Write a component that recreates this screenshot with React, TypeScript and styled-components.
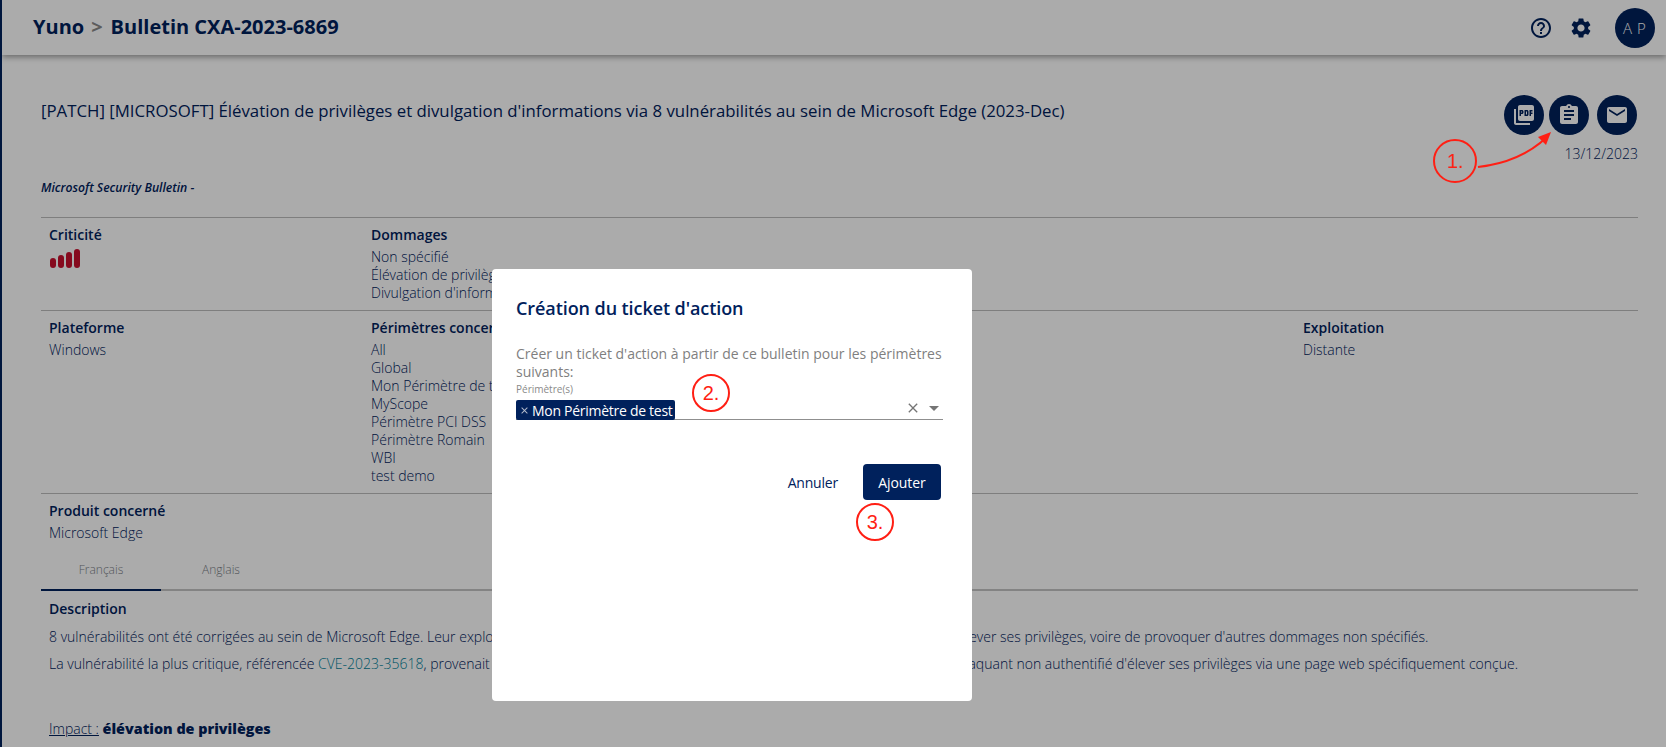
import React from 'react';
import styled, { createGlobalStyle } from 'styled-components';
import {
  MdHelpOutline,
  MdSettings,
  MdPictureAsPdf,
  MdAssignment,
  MdEmail,
  MdClose,
  MdArrowDropDown,
} from 'react-icons/md';

const NAVY = '#00215c';

const GlobalStyle = createGlobalStyle`
  html, body {
    margin: 0;
    height: 100%;
    overflow: hidden;
    background: #fff;
  }
  body {
    font-family: 'Open Sans', 'Liberation Sans', sans-serif;
    font-size: 14px;
    font-weight: 300;
    color: ${NAVY};
  }
  * { box-sizing: border-box; }
`;

const Page = styled.div`
  height: 747px;
  border-left: 2px solid ${NAVY};
  overflow: hidden;
`;

const Header = styled.header`
  height: 55px;
  padding: 0 11px 0 31px;
  display: flex;
  align-items: center;
  justify-content: space-between;
  box-shadow: 0 2px 6px rgba(0, 0, 0, 0.4);
`;

const Crumbs = styled.h1`
  margin: -3px 0 0;
  font-size: 20px;
  font-weight: 700;
  line-height: 27px;
`;

const CrumbSep = styled.span`
  color: #8a8a8a;
  margin: 0 8px 0 7px;
`;

const HeaderIcons = styled.div`
  display: flex;
  align-items: center;
`;

const HeaderIcon = styled.span`
  display: flex;
  font-size: 24px;
  margin-left: 16px;
`;

const Avatar = styled.div`
  width: 40px;
  height: 40px;
  margin-left: 22px;
  padding-left: 4px;
  border-radius: 50%;
  background: ${NAVY};
  color: #fff;
  font-size: 15px;
  letter-spacing: 5px;
  display: flex;
  align-items: center;
  justify-content: center;
`;

const Main = styled.main`
  padding: 40px 28px 0 39px;
`;

const TitleRow = styled.div`
  display: flex;
  justify-content: space-between;
  height: 82px;
`;

const BulletinTitle = styled.h2`
  margin: 5px 0 0;
  font-size: 16.8px;
  font-weight: 400;
  line-height: 22px;
`;

const Actions = styled.div`
  display: flex;
  flex-direction: column;
  align-items: flex-end;
`;

const ActionButtons = styled.div`
  display: flex;
  gap: 5px;
  margin-right: 1px;
`;

const ActionButton = styled.span<{ $gap?: number }>`
  width: 40px;
  height: 40px;
  margin-left: ${p => p.$gap ?? 0}px;
  border-radius: 50%;
  background: ${NAVY};
  color: #fff;
  font-size: 24px;
  display: flex;
  align-items: center;
  justify-content: center;
`;

const DateLabel = styled.div`
  margin-top: 9px;
  font-size: 14px;
  line-height: 20px;
`;

const Source = styled.div`
  font-size: 12.2px;
  font-style: italic;
  font-weight: 600;
  line-height: 16px;
  height: 40px;
  padding-top: 3px;
`;

const InfoRow = styled.section<{ $height: number }>`
  display: grid;
  grid-template-columns: 322px 932px 1fr;
  height: ${p => p.$height}px;
  border-top: 1px solid #bdbdbd;
  padding: 7px 8px 0;
`;

const Cell = styled.div``;

const Label = styled.div`
  font-weight: 600;
  line-height: 19px;
  margin-bottom: 4px;
`;

const Value = styled.div`
  line-height: 18px;
  white-space: nowrap;
`;

const Tabs = styled.nav`
  display: flex;
  height: 37px;
  margin-top: -5px;
  border-bottom: 2px solid #c4c4c4;
`;

const Tab = styled.div<{ $active?: boolean }>`
  width: 120px;
  height: 37px;
  font-size: 12px;
  color: #7b7f88;
  display: flex;
  align-items: center;
  justify-content: center;
  padding-bottom: 5px;
  border-bottom: 2px solid ${p => (p.$active ? NAVY : 'transparent')};
`;

const Description = styled.article`
  padding: 8px 8px 0;

  ${Label} {
    margin-bottom: 9px;
  }
`;

const Paragraph = styled.p`
  margin: 0 0 8px;
  line-height: 19px;
  white-space: nowrap;
`;

const CveLink = styled.a`
  color: #007f9a;
`;

const Impact = styled.p`
  margin: 46px 0 0;
  line-height: 19px;
`;

const ImpactLabel = styled.span`
  text-decoration: underline;
`;

const ImpactValue = styled.strong`
  font-size: 14.35px;
  font-weight: 800;
`;

const Backdrop = styled.div`
  position: fixed;
  inset: 0;
  background: rgba(0, 0, 0, 0.33);
`;

const Modal = styled.div`
  position: absolute;
  left: 492px;
  top: 269px;
  width: 480px;
  height: 432px;
  padding: 24px 29px 24px 24px;
  background: #fff;
  border-radius: 4px;
`;

const ModalTitle = styled.h3`
  margin: 0;
  font-size: 18px;
  font-weight: 600;
  line-height: 30px;
  letter-spacing: -0.08px;
  color: ${NAVY};
`;

const ModalText = styled.p`
  margin: 22px 0 0;
  font-size: 14px;
  font-weight: 400;
  line-height: 18px;
  color: #7f7f7f;
`;

const FieldLabel = styled.div`
  margin-top: 1px;
  font-size: 10px;
  font-weight: 400;
  line-height: 14px;
  color: #8a8a8a;
`;

const Field = styled.div`
  height: 24px;
  display: flex;
  align-items: flex-end;
  justify-content: space-between;
  border-bottom: 1px solid #8f8f8f;
`;

const Chip = styled.span`
  height: 20px;
  margin-bottom: -1px;
  padding: 0 2px 0 3px;
  display: inline-flex;
  align-items: center;
  gap: 2px;
  background: ${NAVY};
  color: #fff;
  border-radius: 2px;
  font-size: 14px;
  font-weight: 400;
  letter-spacing: -0.28px;
  white-space: nowrap;
`;

const ChipClose = styled.span`
  display: flex;
  font-size: 11px;
  color: #b5bdcc;
`;

const FieldIcons = styled.span`
  display: flex;
  align-items: center;
  height: 22px;
  color: #757575;
`;

const ClearIcon = styled.span`
  display: flex;
  font-size: 16px;
  margin-right: 1px;
`;

const CaretIcon = styled.span`
  display: flex;
  font-size: 24px;
  margin-right: -3px;
`;

const ModalActions = styled.div`
  display: flex;
  justify-content: flex-end;
  align-items: center;
  gap: 9px;
  margin: 44px 2px 0 0;
`;

const TextButton = styled.button`
  height: 36px;
  padding: 0 16px;
  border: 0;
  background: none;
  font: inherit;
  font-size: 14px;
  font-weight: 400;
  letter-spacing: -0.2px;
  color: ${NAVY};
`;

const PrimaryButton = styled.button`
  width: 78px;
  height: 36px;
  border: 0;
  border-radius: 4px;
  background: ${NAVY};
  color: #fff;
  font: inherit;
  font-size: 14px;
  font-weight: 400;
  letter-spacing: -0.1px;
`;

// annotations drawn on top of the screenshot
const Callout = styled.div<{ $x: number; $y: number; $size: number }>`
  position: absolute;
  left: ${p => p.$x - p.$size / 2}px;
  top: ${p => p.$y - p.$size / 2}px;
  width: ${p => p.$size}px;
  height: ${p => p.$size}px;
  border: 2px solid #ff1f14;
  border-radius: 50%;
  color: #ff1f14;
  font-family: 'Liberation Sans', Arial, sans-serif;
  font-size: 20px;
  font-weight: 400;
  display: flex;
  align-items: center;
  justify-content: center;
`;

const ArrowSvg = styled.svg`
  position: absolute;
  left: 1470px;
  top: 125px;
`;

const SignalBars = () => (
  <svg width="32" height="22" viewBox="0 0 32 22" style={{ display: 'block' }}>
    <rect x="1" y="10" width="6" height="10" rx="3" fill="#c8102e" />
    <rect x="9" y="7" width="6" height="13" rx="3" fill="#c8102e" />
    <rect x="17" y="4" width="6" height="16" rx="3" fill="#c8102e" />
    <rect x="25" y="1" width="6" height="19" rx="3" fill="#c8102e" />
  </svg>
);

const App = () => {
  return (
    <>
      <GlobalStyle />
      <Page>
        <Header>
          <Crumbs>
            Yuno<CrumbSep>&gt;</CrumbSep>Bulletin CXA-2023-6869
          </Crumbs>
          <HeaderIcons>
            <HeaderIcon><MdHelpOutline /></HeaderIcon>
            <HeaderIcon><MdSettings /></HeaderIcon>
            <Avatar>AP</Avatar>
          </HeaderIcons>
        </Header>
        <Main>
          <TitleRow>
            <BulletinTitle>
              [PATCH] [MICROSOFT] Élévation de privilèges et divulgation d'informations via 8 vulnérabilités au sein de Microsoft Edge (2023-Dec)
            </BulletinTitle>
            <Actions>
              <ActionButtons>
                <ActionButton><MdPictureAsPdf /></ActionButton>
                <ActionButton><MdAssignment /></ActionButton>
                <ActionButton $gap={3}><MdEmail /></ActionButton>
              </ActionButtons>
              <DateLabel>13/12/2023</DateLabel>
            </Actions>
          </TitleRow>
          <Source>Microsoft Security Bulletin -</Source>
          <InfoRow $height={93}>
            <Cell>
              <Label>Criticité</Label>
              <SignalBars />
            </Cell>
            <Cell>
              <Label>Dommages</Label>
              <Value>Non spécifié</Value>
              <Value>Élévation de privilèges</Value>
              <Value>Divulgation d'informations</Value>
            </Cell>
            <Cell />
          </InfoRow>
          <InfoRow $height={183}>
            <Cell>
              <Label>Plateforme</Label>
              <Value>Windows</Value>
            </Cell>
            <Cell>
              <Label>Périmètres concernés</Label>
              <Value>All</Value>
              <Value>Global</Value>
              <Value>Mon Périmètre de test</Value>
              <Value>MyScope</Value>
              <Value>Périmètre PCI DSS</Value>
              <Value>Périmètre Romain</Value>
              <Value>WBI</Value>
              <Value>test demo</Value>
            </Cell>
            <Cell>
              <Label>Exploitation</Label>
              <Value>Distante</Value>
            </Cell>
          </InfoRow>
          <InfoRow $height={66}>
            <Cell>
              <Label>Produit concerné</Label>
              <Value>Microsoft Edge</Value>
            </Cell>
          </InfoRow>
          <Tabs>
            <Tab $active>Français</Tab>
            <Tab>Anglais</Tab>
          </Tabs>
          <Description>
            <Label>Description</Label>
            <Paragraph>
              8 vulnérabilités ont été corrigées au sein de Microsoft Edge. Leur exploitation avérée pourrait permettre à un attaquant distant non authentifié d'élever ses privilèges, voire de provoquer d'autres dommages non spécifiés.
            </Paragraph>
            <Paragraph>
              La vulnérabilité la plus critique, référencée <CveLink>CVE-2023-35618</CveLink>, provenait d'une erreur non spécifiée au sein du moteur et pourrait permettre à un attaquant non authentifié d'élever ses privilèges via une page web spécifiquement conçue.
            </Paragraph>
            <Impact>
              <ImpactLabel>Impact :</ImpactLabel> <ImpactValue>élévation de privilèges</ImpactValue>
            </Impact>
          </Description>
        </Main>
      </Page>
      <Backdrop>
        <Modal>
          <ModalTitle>Création du ticket d'action</ModalTitle>
          <ModalText>Créer un ticket d'action à partir de ce bulletin pour les périmètres suivants:</ModalText>
          <FieldLabel>Périmètre(s)</FieldLabel>
          <Field>
            <Chip>
              <ChipClose><MdClose /></ChipClose>
              Mon Périmètre de test
            </Chip>
            <FieldIcons>
              <ClearIcon><MdClose /></ClearIcon>
              <CaretIcon><MdArrowDropDown /></CaretIcon>
            </FieldIcons>
          </Field>
          <ModalActions>
            <TextButton>Annuler</TextButton>
            <PrimaryButton>Ajouter</PrimaryButton>
          </ModalActions>
        </Modal>
        <Callout $x={1455} $y={161} $size={44}>1.</Callout>
        <Callout $x={711} $y={393} $size={38}>2.</Callout>
        <Callout $x={875} $y={522} $size={38}>3.</Callout>
        <ArrowSvg width="90" height="50" viewBox="0 0 90 50">
          <path d="M8 42 C 35 39, 58 30, 77 12" fill="none" stroke="#ff1f14" strokeWidth="2" />
          <path d="M81 7 L 76 20 L 68 12 Z" fill="#ff1f14" />
        </ArrowSvg>
      </Backdrop>
    </>
  );
};

export default App;
